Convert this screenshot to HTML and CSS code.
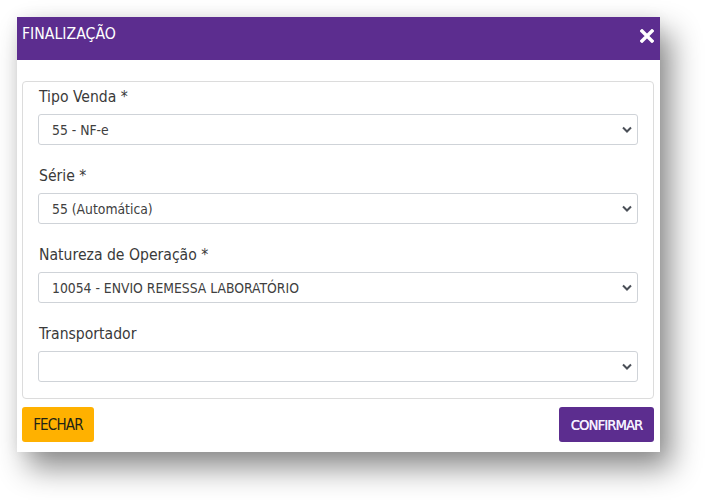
FILE: index.html
```html
<!DOCTYPE html>
<html lang="pt-BR">
<head>
<meta charset="utf-8">
<title>Finalização</title>
<link rel="stylesheet" href="styles.css">
</head>
<body>
<div class="modal">
  <div class="modal-header">
    <span class="modal-title">FINALIZAÇÃO</span>
    <svg class="close" width="14" height="14" viewBox="0 0 14 14"><path d="M2 2 L12 12 M12 2 L2 12" stroke="#fff" stroke-width="3.4" stroke-linecap="square"/></svg>
  </div>
  <div class="modal-body">
    <div class="panel">
      <div class="field">
        <div class="label">Tipo Venda *</div>
        <div class="select"><span>55 - NF-e</span><svg class="chev" width="10" height="7" viewBox="0 0 10 7"><path d="M1 1.5 L5 5.5 L9 1.5" fill="none" stroke="#4a4f57" stroke-width="2"/></svg></div>
      </div>
      <div class="field">
        <div class="label">Série *</div>
        <div class="select"><span>55 (Automática)</span><svg class="chev" width="10" height="7" viewBox="0 0 10 7"><path d="M1 1.5 L5 5.5 L9 1.5" fill="none" stroke="#4a4f57" stroke-width="2"/></svg></div>
      </div>
      <div class="field">
        <div class="label">Natureza de Operação *</div>
        <div class="select"><span>10054 - ENVIO REMESSA LABORATÓRIO</span><svg class="chev" width="10" height="7" viewBox="0 0 10 7"><path d="M1 1.5 L5 5.5 L9 1.5" fill="none" stroke="#4a4f57" stroke-width="2"/></svg></div>
      </div>
      <div class="field">
        <div class="label">Transportador</div>
        <div class="select"><span></span><svg class="chev" width="10" height="7" viewBox="0 0 10 7"><path d="M1 1.5 L5 5.5 L9 1.5" fill="none" stroke="#4a4f57" stroke-width="2"/></svg></div>
      </div>
    </div>
    <div class="actions">
      <button class="btn btn-close">FECHAR</button>
      <button class="btn btn-confirm">CONFIRMAR</button>
    </div>
  </div>
</div>
</body>
</html>
```
FILE: styles.css
```css
html, body {
  margin: 0;
  padding: 0;
  background: #ffffff;
}
body {
  padding: 17px 0 48px 17px;
  min-height: 435px;
  font-family: "DejaVu Sans Condensed", "Liberation Sans", sans-serif;
}
.modal {
  width: 643px;
  background: #fff;
  box-shadow: 11px 16px 28px rgba(0,0,0,0.45), 0 0 14px rgba(0,0,0,0.06);
}
.modal-header {
  height: 43px;
  background: #5c2d8f;
  display: flex;
  align-items: center;
  justify-content: space-between;
  padding: 0 6px 0 5px;
}
.modal-title {
  color: #fff;
  font-size: 15.7px;
  margin-top: -10px;
}
.close {
  display: block;
  margin-top: -5px;
}
.modal-body {
  padding: 21px 6px 10px 5px;
}
.panel {
  border: 1px solid #dcdcdc;
  border-radius: 4px;
  padding: 3px 15px 16px 15px;
  display: flex;
  flex-direction: column;
  gap: 19px;
}
.label {
  font-size: 15.6px;
  line-height: 24px;
  color: #3a3a3a;
  padding-left: 1px;
  margin-bottom: 5px;
}
.select {
  height: 31px;
  box-sizing: border-box;
  border: 1px solid #cfd3d8;
  border-radius: 3px;
  display: flex;
  align-items: center;
  justify-content: space-between;
  padding: 0 5px 0 13px;
  font-size: 13.8px;
  color: #404040;
}
.chev {
  display: block;
}
.actions {
  display: flex;
  justify-content: space-between;
  margin-top: 8px;
}
.btn {
  height: 35px;
  border: none;
  border-radius: 3px;
  font-family: "DejaVu Sans Condensed", "Liberation Sans", sans-serif;
  padding: 0;
}
.btn-close {
  width: 72px;
  background: #ffb100;
  color: #1e2416;
  font-size: 15px;
  letter-spacing: -0.8px;
}
.btn-confirm {
  width: 95px;
  background: #5c2d8f;
  color: #f4f0ff;
  font-size: 14.5px;
  letter-spacing: -0.8px;
  text-shadow: 0.3px 0 0 #f4f0ff;
}
```
